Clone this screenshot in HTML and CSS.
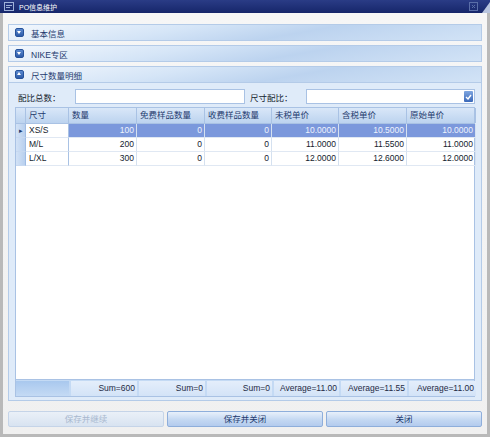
FILE: index.html
```html
<!DOCTYPE html>
<html lang="zh-CN">

<head>
    <meta charset="UTF-8">
    <title>PO信息维护</title>
    <link rel="stylesheet" href="styles.css">
</head>

<body>
    <div class="window">
        <div class="titlebar">
            <svg class="title-icon" width="10" height="9" viewBox="0 0 10 9">
                <rect x="0.5" y="0.5" width="9" height="8" fill="none" stroke="#9fb1d9" />
                <rect x="2" y="3" width="6" height="1" fill="#9fb1d9" />
                <rect x="2" y="5" width="4" height="1" fill="#9fb1d9" />
            </svg>
            <span class="title-text">PO信息维护</span>
            <span class="title-close">
                <svg width="9" height="9" viewBox="0 0 9 9">
                    <rect x="0.5" y="0.5" width="8" height="8" fill="none" stroke="#5a6ea8" />
                    <path d="M3 3 L6 6 M6 3 L3 6" stroke="#5a6ea8" />
                </svg>
            </span>
            <span class="title-grip"></span>
        </div>

        <div class="body">
            <div class="section">
                <span class="sec-icon"></span>
                <span>基本信息</span>
            </div>
            <div class="section">
                <span class="sec-icon"></span>
                <span>NIKE专区</span>
            </div>
            <div class="section open">
                <span class="sec-icon up"></span>
                <span>尺寸数量明细</span>
            </div>

            <div class="panel">
                <div class="form-row">
                    <label>配比总数：</label>
                    <div class="input wide"></div>
                    <label class="second">尺寸配比：</label>
                    <div class="input combo">
                        <span class="combo-btn">
                            <svg width="7" height="6" viewBox="0 0 7 6">
                                <path d="M1 3 L3 5 L6 1" fill="none" stroke="#fff" stroke-width="1.4" />
                            </svg>
                        </span>
                    </div>
                </div>

                <div class="grid">
                    <div class="grid-head">
                        <div class="ind"></div>
                        <div>尺寸</div>
                        <div>数量</div>
                        <div>免费样品数量</div>
                        <div>收费样品数量</div>
                        <div>未税单价</div>
                        <div>含税单价</div>
                        <div>原始单价</div>
                    </div>
                    <div class="grid-row selected">
                        <div class="ind">&#9656;</div>
                        <div class="txt">XS/S</div>
                        <div>100</div>
                        <div>0</div>
                        <div>0</div>
                        <div>10.0000</div>
                        <div>10.5000</div>
                        <div>10.0000</div>
                    </div>
                    <div class="grid-row">
                        <div class="ind"></div>
                        <div class="txt">M/L</div>
                        <div>200</div>
                        <div>0</div>
                        <div>0</div>
                        <div>11.0000</div>
                        <div>11.5500</div>
                        <div>11.0000</div>
                    </div>
                    <div class="grid-row">
                        <div class="ind"></div>
                        <div class="txt">L/XL</div>
                        <div>300</div>
                        <div>0</div>
                        <div>0</div>
                        <div>12.0000</div>
                        <div>12.6000</div>
                        <div>12.0000</div>
                    </div>
                    <div class="grid-empty"></div>
                    <div class="grid-foot">
                        <div class="foot-lead"></div>
                        <div>Sum=600</div>
                        <div>Sum=0</div>
                        <div>Sum=0</div>
                        <div>Average=11.00</div>
                        <div>Average=11.55</div>
                        <div>Average=11.00</div>
                    </div>
                </div>
            </div>

            <div class="buttons">
                <div class="btn disabled">保存并继续</div>
                <div class="btn">保存并关闭</div>
                <div class="btn">关闭</div>
            </div>
        </div>
    </div>
</body>

</html>
```

FILE: styles.css
```css
body {
    margin: 0;
    padding: 0;
    font-family: 'Liberation Sans', 'Noto Sans CJK SC', sans-serif;
    font-size: 8.5px;
    color: #141c2e;
    background: #ffffff;
}

.window {
    width: 490px;
    height: 437px;
    box-sizing: border-box;
    border: 3px solid #b9b9b9;
    border-top: none;
    background: #f0f0f0;
    display: flex;
    flex-direction: column;
}

.titlebar {
    height: 13px;
    margin: 0 -3px;
    background: linear-gradient(#2a3c86, #16266a);
    display: flex;
    align-items: center;
    color: #ffffff;
    font-size: 7px;
    padding-left: 4px;
}

.title-icon {
    margin-right: 5px;
}

.title-text {
    flex: 1;
}

.title-close {
    display: flex;
    margin-right: 4px;
}

.title-grip {
    width: 0;
    height: 0;
    border-left: 8px solid transparent;
    border-bottom: 11px solid #b8c4de;
    align-self: flex-end;
}

.body {
    flex: 1;
    display: flex;
    flex-direction: column;
    padding: 11px 5px 0 5px;
    background: linear-gradient(#f6f6f6, #f0f0f0);
}

/* collapsible group headers */
.section {
    height: 17px;
    box-sizing: border-box;
    border: 1px solid #b4cbe8;
    background: linear-gradient(170deg, #f2f7fd 0%, #d5e5f7 35%, #bcd3ef 60%, #d2e3f6 100%);
    display: flex;
    align-items: center;
    gap: 7px;
    padding-left: 6px;
    margin-bottom: 4px;
    color: #1e3a6e;
}

.section.open {
    margin-bottom: 0;
}

.sec-icon {
    width: 7px;
    height: 7px;
    border-radius: 2px;
    background: linear-gradient(#5c8ad0, #2c5aa8);
    border: 1px solid #26529a;
    position: relative;
}

.sec-icon::after {
    content: "";
    position: absolute;
    left: 1px;
    top: 2px;
    border-left: 2.5px solid transparent;
    border-right: 2.5px solid transparent;
    border-top: 3px solid #ffffff;
}

.sec-icon.up::after {
    border-top: none;
    border-bottom: 3px solid #ffffff;
    top: 1px;
}

.panel {
    flex: 1;
    background: #dfebf9;
    border: 1px solid #b4cbe8;
    border-top: none;
    padding: 6px 6px 3px 6px;
    display: flex;
    flex-direction: column;
}

.form-row {
    display: flex;
    align-items: center;
    height: 15px;
    margin-bottom: 3px;
    padding-left: 3px;
}

.form-row label {
    width: 58px;
}

.form-row label.second {
    width: 57px;
    margin-left: 5px;
}

.input {
    height: 15px;
    box-sizing: border-box;
    border: 1px solid #a9c2e4;
    background: #ffffff;
}

.input.wide {
    width: 171px;
}

.input.combo {
    width: 170px;
    display: flex;
    justify-content: flex-end;
}

.combo-btn {
    width: 9px;
    height: 11px;
    margin: 1px;
    border-radius: 1px;
    background: linear-gradient(#7fa6e0, #3a68b8);
    display: flex;
    align-items: center;
    justify-content: center;
}

/* data grid */
.grid {
    flex: 1;
    background: #ffffff;
    border: 1px solid #a9c2e4;
    display: flex;
    flex-direction: column;
}

.grid-head,
.grid-row,
.grid-foot {
    display: grid;
    grid-template-columns: 10px 43px 68px 68px 67px 67px 68px 69px;
}

.grid-head {
    height: 16px;
    box-sizing: border-box;
    background: linear-gradient(#d9e7f8, #bcd3ef);
    border-bottom: 1px solid #a9c2e4;
}

.grid-head div {
    border-right: 1px solid #a9c2e4;
    padding-left: 3px;
    line-height: 15px;
    color: #1e3a6e;
}

.grid-head .ind {
    padding: 0;
}

.grid-row {
    height: 14px;
}

.grid-row div {
    border-right: 1px solid #d5e1f0;
    border-bottom: 1px solid #e0e8f3;
    text-align: right;
    padding-right: 2px;
    line-height: 13px;
}

.grid-row .ind {
    background: linear-gradient(90deg, #d2e2f6, #b8cfee);
    border-right: 1px solid #9fbce4;
    border-bottom: 1px solid #c6d8f0;
    padding: 0;
    text-align: center;
    color: #1e3a6e;
    font-size: 7px;
}

.grid-row .txt {
    text-align: left;
    padding-left: 3px;
    border-right: 1px solid #a9c2e4;
}

.grid-row.selected div {
    background: #7b98dc;
    color: #eef3fc;
}

.grid-row.selected .ind {
    background: linear-gradient(90deg, #d2e2f6, #b8cfee);
    color: #1e3a6e;
}

.grid-row.selected .txt {
    background: #ffffff;
    color: #141c2e;
}

.grid-empty {
    flex: 1;
}

.grid-foot {
    height: 17px;
    background: #c4daf4;
    border-top: 1px solid #a9c2e4;
    padding: 1px 0;
    box-sizing: border-box;
}

.grid-foot div {
    background: linear-gradient(#e4eefb, #d3e3f7);
    margin-left: 2px;
    text-align: right;
    padding-right: 2px;
    line-height: 15px;
    color: #1e2a44;
}

.grid-foot .foot-lead {
    grid-column: span 2;
    background: linear-gradient(#a9c8ee, #c4daf4);
    margin-left: 0;
}

.buttons {
    display: grid;
    grid-template-columns: 1fr 1fr 1fr;
    gap: 3px;
    margin: 10px 0 7px 0;
}

.btn {
    height: 16px;
    box-sizing: border-box;
    border: 1px solid #8eaedb;
    border-radius: 2px;
    background: linear-gradient(#e8f0fb, #c4d8f2 55%, #b3cbee);
    text-align: center;
    line-height: 14px;
    color: #1e3a6e;
}

.btn.disabled {
    border-color: #c5d4e8;
    background: linear-gradient(#eaf0f8, #d8e3f1);
    color: #a8b8cf;
}
```
